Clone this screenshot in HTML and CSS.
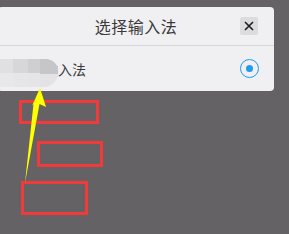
FILE: index.html
```html
<!DOCTYPE html>
<html lang="zh">
<head>
    <meta charset="UTF-8">
    <title>选择输入法</title>
    <link rel="stylesheet" href="styles.css">
</head>
<body>
    <div class="dialog">
        <div class="dialog-header">
            <span></span>
            <span class="dialog-title">选择输入法</span>
            <button class="close-btn">
                <svg width="10" height="10" viewBox="0 0 10 10">
                    <path d="M1 1 L9 9 M9 1 L1 9" stroke="#1c1c1c" stroke-width="1.6" fill="none"/>
                </svg>
            </button>
        </div>
        <div class="option-row">
            <span class="option-text">输入法</span>
            <span class="radio checked"></span>
            <div class="mosaic">
                <span class="m1"></span>
                <span class="m2"></span>
                <span class="m3"></span>
                <span class="m4"></span>
            </div>
        </div>
    </div>

    <!-- marcas de anotacion -->
    <svg class="marks" width="289" height="234" viewBox="0 0 289 234">
        <g fill="none" stroke="#f23a3a" stroke-width="3">
            <rect x="20.5" y="101.5" width="77" height="21"/>
            <rect x="38.5" y="142.5" width="63" height="23"/>
            <rect x="22.5" y="182.5" width="64" height="31"/>
        </g>
        <polygon points="40,88 46,107 39.5,104 25,183 33.5,104 32,106" fill="#ffff00"/>
    </svg>
</body>
</html>
```

FILE: styles.css
```css
body {
    margin: 0;
    width: 289px;
    height: 234px;
    overflow: hidden;
    background-color: #646264;
    font-family: "Noto Sans CJK SC", "Noto Sans", sans-serif;
    position: relative;
}

.dialog {
    margin: 7px 0 0 -2px;
    width: 276px;
    height: 84px;
    background-color: #f0eff2;
    border-radius: 4px;
}

.dialog-header {
    height: 38px;
    display: grid;
    grid-template-columns: 1fr auto 1fr;
    align-items: center;
    border-bottom: 1px solid #d6d5d8;
}

.dialog-title {
    font-size: 16px;
    color: #3a3a3a;
    letter-spacing: 0.5px;
}

.close-btn {
    justify-self: end;
    margin-right: 16px;
    width: 18px;
    height: 18px;
    padding: 0;
    border: none;
    border-radius: 2px;
    background-color: #dcdbde;
    display: flex;
    align-items: center;
    justify-content: center;
}

.option-row {
    position: relative;
    height: 45px;
    display: flex;
    align-items: center;
    justify-content: space-between;
    padding: 0 15px 0 46px;
}

.option-text {
    font-size: 14px;
    color: #3a3a3a;
}

.radio {
    width: 17px;
    height: 17px;
    border: 1.5px solid #1d9cf0;
    border-radius: 50%;
    display: flex;
    align-items: center;
    justify-content: center;
}

.radio.checked::after {
    content: "";
    width: 7px;
    height: 7px;
    border-radius: 50%;
    background-color: #1d9cf0;
}

/* mosaico que tapa el nombre */
.mosaic {
    position: absolute;
    left: 0;
    top: 13px;
    width: 62px;
    height: 28px;
    display: flex;
    border-radius: 0 0 14px 0;
    overflow: hidden;
}

.mosaic span {
    height: 100%;
}

.m1 { width: 15px; background: linear-gradient(#e0dfe1 0 50%, #e8e7ea 50%); }
.m2 { width: 15px; background: linear-gradient(#d7d6d8 0 50%, #e6e5e8 50%); }
.m3 { width: 12px; background: linear-gradient(#cfced0 0 50%, #e5e4e7 50%); }
.m4 { width: 18px; background: linear-gradient(#c6c5c7 0 55%, #e3e2e5 55%); border-radius: 0 12px 14px 0; }

.marks {
    position: absolute;
    left: 0;
    top: 0;
}
```
